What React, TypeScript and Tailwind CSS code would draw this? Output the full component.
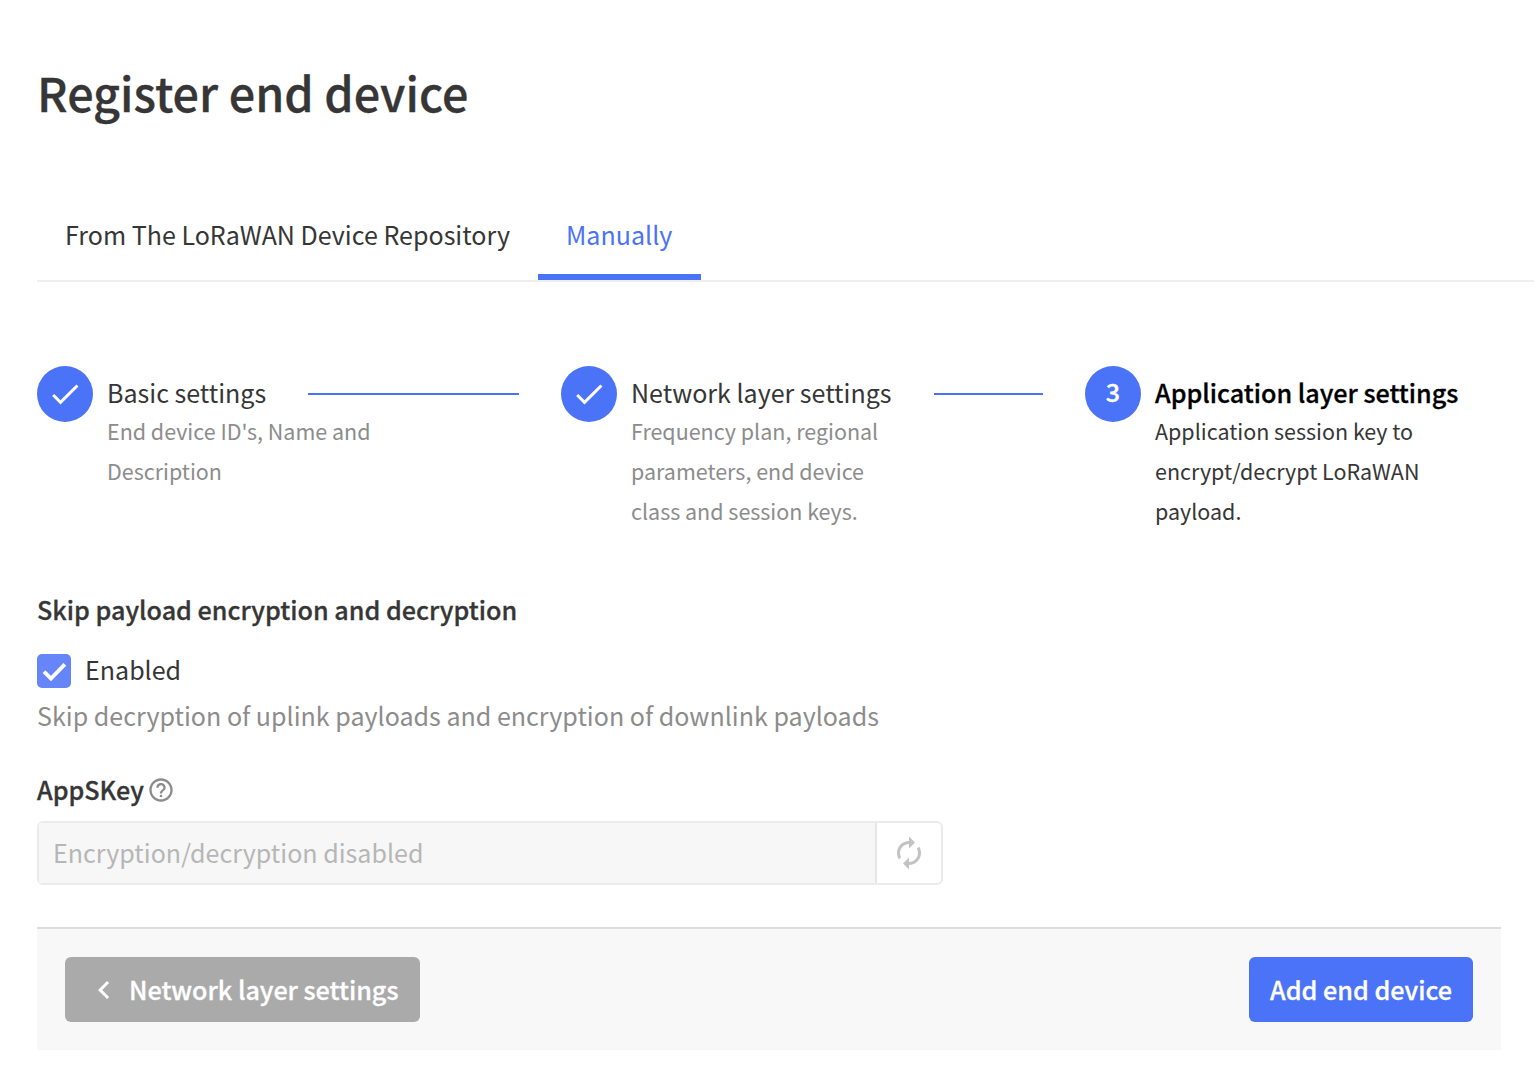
import React from 'react';

const steps = [
  {
    title: 'Basic settings',
    lines: ["End device ID's, Name and", 'Description'],
    done: true,
    titleWidth: 'w-[159px]',
    line: 'w-[211px]',
  },
  {
    title: 'Network layer settings',
    lines: ['Frequency plan, regional', 'parameters, end device', 'class and session keys.'],
    done: true,
    titleWidth: 'w-[261px]',
    line: 'w-[109px]',
  },
  {
    title: 'Application layer settings',
    lines: ['Application session key to', 'encrypt/decrypt LoRaWAN', 'payload.'],
    done: false,
    titleWidth: 'w-[310px]',
    line: '',
  },
];

const heavy = 'font-medium [-webkit-text-stroke:0.3px_currentColor]';
const semibold = `text-[25.15px] ${heavy}`;

function Icon({ d, className }: { d: string; className: string }) {
  return (
    <svg viewBox="0 0 24 24" className={`shrink-0 fill-current ${className}`}>
      <path d={d} />
    </svg>
  );
}

const icons = {
  check: 'M9 16.17 4.83 12l-1.42 1.41L9 19 21 7l-1.41-1.41z',
  help: 'M11 18h2v-2h-2v2zm1-16C6.48 2 2 6.48 2 12s4.48 10 10 10 10-4.48 10-10S17.52 2 12 2zm0 18c-4.41 0-8-3.59-8-8s3.59-8 8-8 8 3.59 8 8-3.59 8-8 8zm0-14c-2.21 0-4 1.79-4 4h2c0-1.1.9-2 2-2s2 .9 2 2c0 2-3 1.75-3 5h2c0-2.25 3-2.5 3-5 0-2.21-1.79-4-4-4z',
  renew: 'M12 6v3l4-4-4-4v3c-4.42 0-8 3.58-8 8 0 1.57.46 3.03 1.24 4.26L6.7 14.8c-.45-.83-.7-1.79-.7-2.8 0-3.31 2.69-6 6-6zm6.76 1.74L17.3 9.2c.44.84.7 1.79.7 2.8 0 3.31-2.69 6-6 6v-3l-4 4 4 4v-3c4.42 0 8-3.58 8-8 0-1.57-.46-3.03-1.24-4.26z',
  back: 'M15.41 7.41 14 6l-6 6 6 6 1.41-1.41L10.83 12z',
};

export default function App() {
  return (
    <div className="flex h-[1084px] w-[1534px] flex-col overflow-hidden bg-white pl-[37px] font-['Noto_Sans_CJK_SC',sans-serif] text-[25.05px] leading-10 whitespace-nowrap text-[#363636]">
      <h1 className={`mt-[57px] h-[70px] text-[46.72px] leading-[70px] ${heavy}`}>Register end device</h1>

      <nav className="mt-[65px] flex h-[90px] border-b-2 border-[#eeeeee]">
        <div className="w-[501px] px-7 pt-[22px]">From The LoRaWAN Device Repository</div>
        <div className="h-[88px] w-[163px] border-b-6 border-[#4b73f7] px-7 pt-[22px] text-[#4b73f7]">Manually</div>
      </nav>

      <ol className="mt-[84px] flex h-[206px]">
        {steps.map((s, i) => (
          <li key={s.title} className="flex w-[524px] shrink-0">
            <div className={`flex size-14 shrink-0 items-center justify-center rounded-full bg-[#4b73f7] text-white ${semibold}`}>
              {s.done ? <Icon d={icons.check} className="size-9" /> : <span className="pb-[6px]">{i + 1}</span>}
            </div>
            <div className="ml-3.5 pt-[6px]">
              <div className="flex">
                <span className={`${s.titleWidth} ${s.done ? '' : `text-black ${semibold}`}`}>{s.title}</span>
                {s.line && <span className={`mt-[21px] ml-[42px] h-0.5 bg-[#4b73f7] ${s.line}`} />}
              </div>
              <div className={`-mt-px text-[21.48px] ${s.done ? 'text-[#8c8c8c]' : ''}`}>
                {s.lines.map((l) => (
                  <div key={l}>{l}</div>
                ))}
              </div>
            </div>
          </li>
        ))}
      </ol>

      <div className={`mt-[17px] ${semibold}`}>Skip payload encryption and decryption</div>
      <div className="mt-5 flex h-10">
        <span className="mt-[5px] flex size-[34px] items-center justify-center rounded-[5px] bg-[#6585f9] text-white">
          <svg viewBox="0 0 34 34" className="size-[34px] fill-none stroke-current stroke-[3.8]">
            <path d="M7 17.6 14 24.6 27.8 10.4" />
          </svg>
        </span>
        <span className="ml-3.5">Enabled</span>
      </div>
      <div className="mt-[6px] text-[#8c8c8c]">Skip decryption of uplink payloads and encryption of downlink payloads</div>

      <div className="mt-[34px] flex h-10">
        <span className={`w-[109.5px] ${semibold}`}>AppSKey</span>
        <Icon d={icons.help} className="mt-[7px] size-[28px] text-[#8c8c8c]" />
      </div>
      <div className="mt-[12px] flex h-16 w-[906px] rounded-md border-2 border-[#ebebeb]">
        <div className="w-[838px] border-r-2 border-[#e6e6e6] bg-[#f7f7f7] pt-[9px] pl-[14px] text-[#b6b6b6]">
          Encryption/decryption disabled
        </div>
        <div className="flex flex-1 items-center justify-center text-[#c3c3c3]">
          <Icon d={icons.renew} className="size-9" />
        </div>
      </div>

      <footer className="mt-[42px] flex h-[123px] w-[1464px] justify-between border-t-2 border-[#dddddd] bg-[#f8f8f8] px-7 pt-7">
        <button className={`flex h-[65px] w-[355px] rounded-md bg-[#aaaaaa] pt-[12px] pl-[21px] text-white ${semibold}`}>
          <Icon d={icons.back} className="mt-[3px] size-9" />
          <span className="ml-[7px]">Network layer settings</span>
        </button>
        <button className={`flex h-[65px] w-[224px] justify-center rounded-md bg-[#4b73f7] pt-[12px] text-white ${semibold}`}>
          Add end device
        </button>
      </footer>
    </div>
  );
}
